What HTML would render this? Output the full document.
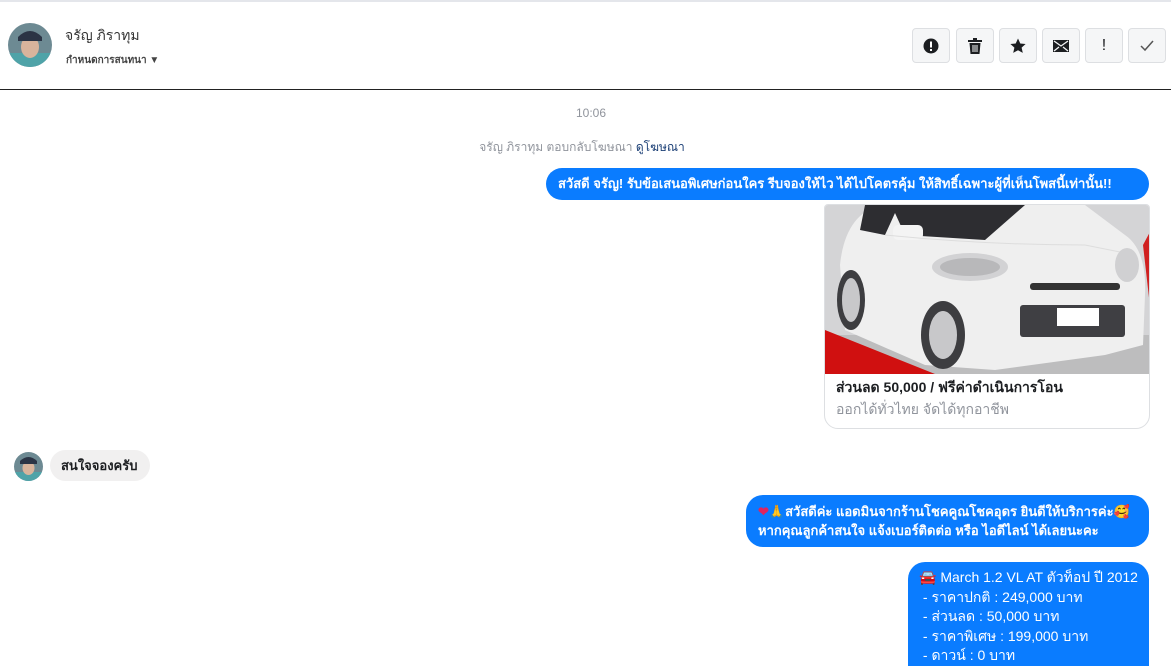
<!DOCTYPE html><html><head><meta charset="utf-8"><style>
*{margin:0;padding:0;box-sizing:border-box}
html,body{width:1171px;height:666px;overflow:hidden}
body{background:#fff;font-family:"Liberation Sans","Noto Sans CJK SC",sans-serif;position:relative;color:#1c1e21}
.a{position:absolute}
.btn{position:absolute;top:28px;width:38px;height:35px;background:#f5f6f7;border:1px solid #dddfe2;border-radius:4px;display:flex;align-items:center;justify-content:center}
.blue{background:#0a7cff;color:#fff;border-radius:17px;font-weight:bold;font-size:13px}
</style></head><body>
<div class="a" style="left:0;top:0;width:1171px;height:2px;background:#e4e6eb"></div>
<div class="a" style="left:0;top:89px;width:1171px;height:1px;background:#222"></div>
<svg class="a" style="left:8px;top:23px" width="44" height="44"><defs><clipPath id="c"><circle cx="22" cy="22" r="22"/></clipPath></defs><g clip-path="url(#c)"><rect width="44" height="44" fill="#6d8a93"/><rect y="30" width="44" height="14" fill="#4fa3a8"/><ellipse cx="22" cy="24" rx="9" ry="11" fill="#d9b49c"/><path d="M10 14 Q22 2 34 14 L34 18 L10 18Z" fill="#2b3445"/></g></svg>
<div class="a" style="left:65px;top:25px;font-size:14px;color:#333">จรัญ ภิราทุม</div>
<div class="a" style="left:66px;top:53px;font-size:10px;font-weight:bold;color:#444">กำหนดการสนทนา <span style="font-size:10px">▼</span></div>
<div class="btn" style="left:912px"><svg width="16" height="16"><circle cx="8" cy="8" r="7.5" fill="#1c1e21"/><rect x="7" y="3.5" width="2" height="6" fill="#fff"/><rect x="7" y="11" width="2" height="2" fill="#fff"/></svg></div>
<div class="btn" style="left:956px"><svg width="14" height="16"><rect x="0" y="2" width="14" height="2" fill="#1c1e21"/><rect x="5" y="0" width="4" height="2" fill="#1c1e21"/><path d="M1.5 5h11l-1 11h-9z" fill="#1c1e21"/><path d="M5 7v7M7 7v7M9 7v7" stroke="#f5f6f7" stroke-width="1"/></svg></div>
<div class="btn" style="left:999px"><svg width="16" height="16"><path d="M8 0.5l2.3 5 5.3.5-4 3.6 1.2 5.3L8 12.2 3.2 14.9l1.2-5.3-4-3.6 5.3-.5z" fill="#1c1e21"/></svg></div>
<div class="btn" style="left:1042px"><svg width="16" height="12"><rect width="16" height="12" fill="#1c1e21"/><path d="M1 1l7 5 7-5M1 11l5-4M15 11l-5-4" stroke="#f5f6f7" stroke-width="1.3" fill="none"/></svg></div>
<div class="btn" style="left:1085px;font-size:16px;color:#1c1e21">!</div>
<div class="btn" style="left:1128px"><svg width="14" height="12"><path d="M1 6l4 4 8-9" stroke="#555" stroke-width="1.5" fill="none"/></svg></div>
<div class="a" style="left:0;width:1182px;top:106px;text-align:center;font-size:12px;color:#90949c">10:06</div>
<div class="a" style="left:0;width:1164px;top:138px;text-align:center;font-size:12px;color:#90949c">จรัญ ภิราทุม ตอบกลับโฆษณา <span style="color:#1a3e75">ดูโฆษณา</span></div>
<div class="a blue" style="left:546px;top:168px;width:603px;height:32px;line-height:32px;padding-left:12px;white-space:nowrap">สวัสดี จรัญ! รับข้อเสนอพิเศษก่อนใคร รีบจองให้ไว ได้ไปโคตรคุ้ม ให้สิทธิ์เฉพาะผู้ที่เห็นโพสนี้เท่านั้น!!</div>
<div class="a" style="left:824px;top:204px;width:326px;height:225px;border:1px solid #dddfe2;border-radius:4px 4px 14px 14px;overflow:hidden">
<svg width="326" height="169" style="display:block"><rect width="326" height="169" fill="#d4d4d6"/><rect y="130" width="326" height="39" fill="#bdbdbe"/><path d="M0 125 L0 169 L110 169Z" fill="#d01010"/><path d="M318 40 L326 25 L326 110Z" fill="#d02020"/>
<path d="M15 60 Q20 10 55 0 L260 0 L300 30 Q322 45 320 90 L318 140 L280 150 L170 165 L100 160 L20 125Z" fill="#efefef"/>
<path d="M40 0 L35 25 L60 30 L70 8 L80 30 L160 35 L200 0Z" fill="#2d2d31"/><rect x="68" y="20" width="30" height="15" rx="5" fill="#f4f4f4"/>
<path d="M60 30 Q160 40 260 40 L310 50" stroke="#ddd" fill="none"/>
<ellipse cx="145" cy="62" rx="38" ry="14" fill="#d2d2d4"/><ellipse cx="145" cy="62" rx="30" ry="9" fill="#b8b8ba"/><ellipse cx="302" cy="60" rx="12" ry="17" fill="#d0d0d2"/>
<rect x="205" y="78" width="90" height="7" rx="3" fill="#333"/><rect x="195" y="100" width="105" height="32" rx="3" fill="#3f3f43"/><rect x="232" y="103" width="42" height="18" fill="#fff"/>
<ellipse cx="118" cy="130" rx="22" ry="34" fill="#3d3d40"/><ellipse cx="118" cy="130" rx="14" ry="24" fill="#c8c8ca"/><ellipse cx="26" cy="95" rx="14" ry="30" fill="#3d3d40"/><ellipse cx="26" cy="95" rx="9" ry="22" fill="#c8c8ca"/></svg>
<div style="padding:3px 0 0 11px;font-size:14px;font-weight:bold;color:#1c1e21">ส่วนลด 50,000 / ฟรีค่าดำเนินการโอน</div>
<div style="padding:0 0 0 11px;font-size:14px;color:#90949c">ออกได้ทั่วไทย จัดได้ทุกอาชีพ</div></div>
<svg class="a" style="left:14px;top:452px" width="29" height="29"><defs><clipPath id="d"><circle cx="14.5" cy="14.5" r="14.5"/></clipPath></defs><g clip-path="url(#d)"><rect width="29" height="29" fill="#6d8a93"/><rect y="20" width="29" height="9" fill="#4fa3a8"/><ellipse cx="14.5" cy="16" rx="6" ry="7" fill="#d9b49c"/><path d="M6 9 Q14.5 1 23 9 L23 12 L6 12Z" fill="#2b3445"/></g></svg>
<div class="a" style="left:50px;top:450px;width:100px;height:31px;line-height:31px;background:#f1f0f0;border-radius:16px;padding-left:11px;font-size:13px;font-weight:bold">สนใจจองครับ</div>
<div class="a blue" style="left:746px;top:495px;width:403px;height:52px;padding:7px 0 0 12px;line-height:19px;white-space:nowrap"><span style="color:#e0245e">❤</span><span style="color:#f5b041">🙏</span>สวัสดีค่ะ แอดมินจากร้านโชคคูณโชคอุดร ยินดีให้บริการค่ะ🥰<br>หากคุณลูกค้าสนใจ แจ้งเบอร์ติดต่อ หรือ ไอดีไลน์ ได้เลยนะคะ</div>
<div class="a blue" style="left:908px;top:562px;width:241px;height:130px;padding:6px 0 0 11px;font-weight:normal;font-size:14px;line-height:19.5px;white-space:nowrap"><span style="color:#e04040">🚘</span> March 1.2 VL AT ตัวท็อป ปี 2012<br>&nbsp;- ราคาปกติ : 249,000 บาท<br>&nbsp;- ส่วนลด : 50,000 บาท<br>&nbsp;- ราคาพิเศษ : 199,000 บาท<br>&nbsp;- ดาวน์ : 0 บาท</div>
</body></html>
